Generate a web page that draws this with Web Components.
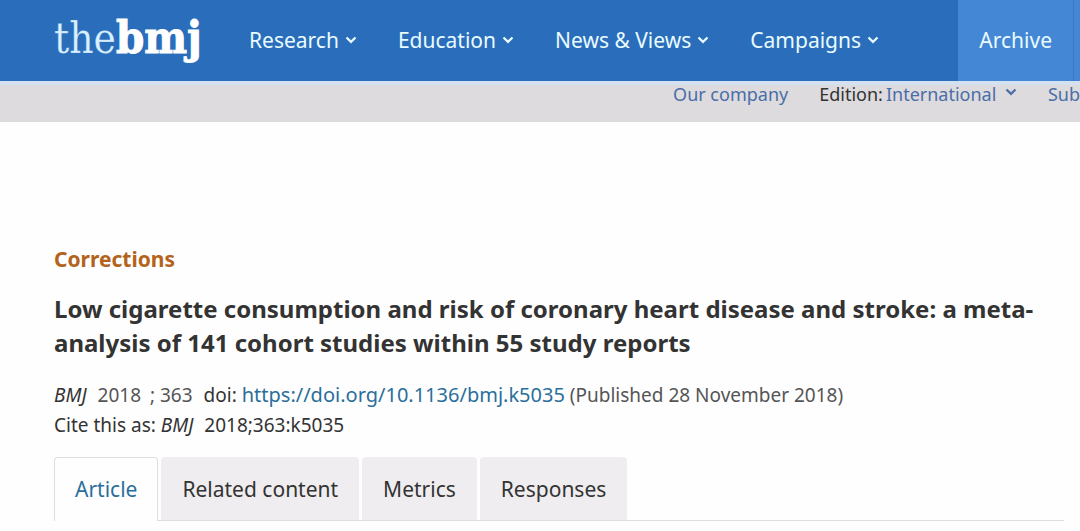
<!DOCTYPE html>
<html lang="en">
<head>
<meta charset="utf-8">
<meta name="viewport" content="width=device-width, initial-scale=1">
<title>Low cigarette consumption and risk of coronary heart disease and stroke | The BMJ</title>
<style>
  body { margin: 0; background: #fefefe; color: #333; font-family: "Noto Sans", "Open Sans", sans-serif; font-size: 19px; overflow-x: hidden; }
</style>
</head>
<body>
<bmj-page></bmj-page>
<script>
const define = (name, html) => {
  const template = document.createElement('template');
  template.innerHTML = html;
  customElements.define(name, class extends HTMLElement {
    constructor() {
      super();
      this.attachShadow({ mode: 'open' }).append(template.content.cloneNode(true));
    }
  });
};

define('bmj-chevron', `
  <style>
    :host { display: inline-block; width: 12px; height: 8px; }
    svg { display: block; width: 100%; height: 100%; }
  </style>
  <svg viewBox="0 0 12 8" aria-hidden="true"><path d="M1.5 1.5 6 5.8 10.500 1.500" fill="none" stroke="currentColor" stroke-width="2.300"/></svg>`);

define('bmj-logo', `
  <style>
    :host { display: block; }
    a { display: block; color: #fff; text-decoration: none; font: 42px/48px "DejaVu Serif Condensed", "DejaVu Serif", serif; font-stretch: condensed; white-space: nowrap; }
    .the { color: #d9f0ff; -webkit-text-stroke: 1px rgba(42, 110, 187, .2); }
    b { font-size: 45px; -webkit-text-stroke: 1px #fff; }
  </style>
  <a href="#" aria-label="the bmj"><span class="the">the</span><b>bmj</b></a>`);

define('bmj-nav-item', `
  <style>
    :host { display: block; }
    a { display: flex; align-items: center; gap: 6px; color: #e9fbff; text-decoration: none; font-size: 21px; line-height: 30px; white-space: nowrap; }
  </style>
  <a href="#"><slot></slot><bmj-chevron></bmj-chevron></a>`);

define('bmj-header', `
  <style>
    :host { display: flex; height: 81px; background: #2a6ebb; }
    bmj-logo { padding: 14px 0 0 54px; width: 249px; box-sizing: border-box; flex: none; }
    nav { display: flex; align-items: center; gap: 41px; flex: none; padding-bottom: 2px; }
    .archive { display: flex; flex: none; margin-left: auto; padding-right: 6px; background: #4487d5; }
    .archive a { display: flex; align-items: center; padding: 0 21px 2px; border-right: 1px solid #3a78c4; color: #e9fbff; text-decoration: none; font-size: 21px; line-height: 30px; }
  </style>
  <bmj-logo></bmj-logo>
  <nav aria-label="Main">
    <bmj-nav-item>Research</bmj-nav-item>
    <bmj-nav-item>Education</bmj-nav-item>
    <bmj-nav-item>News &amp; Views</bmj-nav-item>
    <bmj-nav-item>Campaigns</bmj-nav-item>
  </nav>
  <div class="archive"><a href="#">Archive</a></div>`);

define('bmj-utility-bar', `
  <style>
    :host { display: flex; justify-content: flex-end; align-items: flex-start; gap: 31px; height: 41px; box-sizing: border-box; background: #dddbdd; border-top: 4px solid #d3e1f0; font-size: 18px; line-height: 26px; white-space: nowrap; }
    a, select { color: #4a6ea8; text-decoration: none; }
    a, form { margin-top: -4px; }
    form { display: flex; align-items: center; }
    label { margin-right: 3px; }
    select { appearance: none; border: 0; padding: 0; margin: 0; background: none; font: inherit; }
    bmj-chevron { margin: 0 0 4px 8px; color: #4a6ea8; }
  </style>
  <a href="#">Our company</a>
  <form>
    <label for="edition">Edition:</label>
    <select id="edition"><option>International</option></select>
    <bmj-chevron></bmj-chevron>
  </form>
  <a href="#">Sub</a>`);

define('bmj-article-head', `
  <style>
    :host { display: block; }
    .kicker { margin: 0; color: #b3631b; font-size: 21px; line-height: 30px; font-weight: 700; }
    h1 { margin: 18px 0 0; font-size: 24px; line-height: 34px; font-weight: 700; }
    p { margin: 0; line-height: 30px; }
    .cite { margin-top: 20px; color: #555; }
    a { color: #2a6e9b; text-decoration: none; font-size: 20px; }
    i { margin-right: 6px; }
    .year { margin-right: 4px; }
    .volume { margin-right: 6px; }
    .dark { color: #333; }
  </style>
  <p class="kicker">Corrections</p>
  <h1>Low cigarette consumption and risk of coronary heart disease and stroke: a meta-analysis of 141 cohort studies within 55 study reports</h1>
  <p class="cite"><i class="dark">BMJ</i> <span class="year">2018</span> <span class="volume">; 363</span> <span class="dark">doi:</span> <a href="#">https://doi.org/10.1136/bmj.k5035</a> (Published 28 November 2018)</p>
  <p>Cite this as: <i>BMJ</i> 2018;363:k5035</p>`);

define('bmj-tabs', `
  <style>
    :host { display: flex; gap: 3px; border-bottom: 1px solid #dddde2; }
    button { height: 63px; box-sizing: border-box; margin: 0; padding: 0 20px; border: 1px solid #efedef; border-bottom: 0; border-radius: 4px 4px 0 0; background: #efedef; color: #333; font-family: inherit; font-size: 21px; line-height: 30px; white-space: nowrap; }
    button[aria-selected="true"] { height: 64px; margin-bottom: -1px; padding-bottom: 1px; border-color: #dddde2; background: #fefefe; color: #2a6e9b; }
  </style>
  <button role="tab" aria-selected="true">Article</button>
  <button role="tab" aria-selected="false">Related content</button>
  <button role="tab" aria-selected="false">Metrics</button>
  <button role="tab" aria-selected="false">Responses</button>`);

define('bmj-page', `
  <style>
    :host { display: block; }
    main { padding: 122px 16px 0 54px; }
    bmj-tabs { margin-top: 17px; }
  </style>
  <bmj-header></bmj-header>
  <bmj-utility-bar></bmj-utility-bar>
  <main>
    <bmj-article-head></bmj-article-head>
    <bmj-tabs role="tablist"></bmj-tabs>
  </main>`);
</script>
</body>
</html>
